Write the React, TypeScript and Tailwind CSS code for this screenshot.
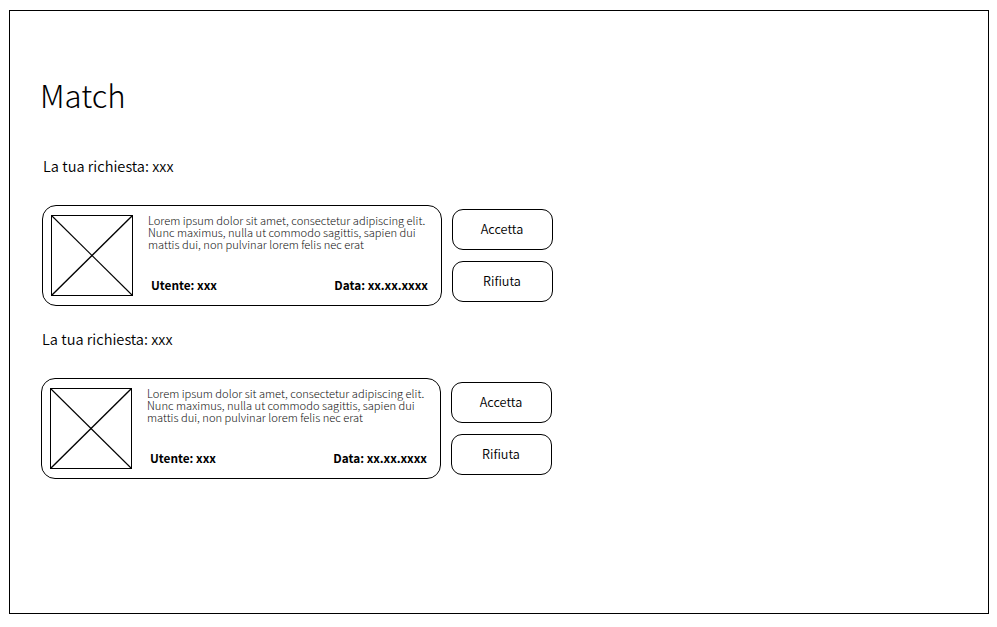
const LOREM = [
  "Lorem ipsum dolor sit amet, consectetur adipiscing elit.",
  "Nunc maximus, nulla ut commodo sagittis, sapien dui",
  "mattis dui, non pulvinar lorem felis nec erat",
];

function ImagePlaceholder() {
  return (
    <svg className="block h-[81px] w-[82px] shrink-0" viewBox="0 0 82 81" fill="none" stroke="#000">
      <rect x="0.5" y="0.5" width="81" height="80" />
      <path d="M0.5 0.5L81.5 80.5" strokeWidth="1.1" />
      <path d="M81.5 0.5L0.5 80.5" strokeWidth="1.4" />
    </svg>
  );
}

function ActionButton({ label }: { label: string }) {
  return (
    <button className="flex h-[41px] w-[101px] items-center justify-center rounded-[11px] border border-black bg-white pr-px pb-[2px] text-[12.7px] leading-5 font-[350]">
      {label}
    </button>
  );
}

function MatchRequest() {
  return (
    <section className="h-[173px]">
      <h2 className="ml-px h-5 text-[14.6px] leading-5 font-[350] whitespace-nowrap">
        La tua richiesta: xxx
      </h2>
      <div className="mt-[29px] flex">
        <article className="flex h-[101px] w-[400px] rounded-[14px] border border-black pt-[9px] pl-2">
          <ImagePlaceholder />
          <div className="-mt-px ml-[15px] w-[282px]">
            <p className="h-9 text-[11.13px] leading-3 font-light whitespace-nowrap text-[#111]">
              {LOREM.map((line) => (
                <span key={line} className="block">{line}</span>
              ))}
            </p>
            <div className="mt-[27px] flex justify-between pr-[2px] pl-[3px] text-[11.8px] leading-4 font-bold whitespace-nowrap">
              <span>Utente: xxx</span>
              <span>Data: xx.xx.xxxx</span>
            </div>
          </div>
        </article>
        <div className="mt-1 ml-[10px] flex flex-col gap-[11px]">
          <ActionButton label="Accetta" />
          <ActionButton label="Rifiuta" />
        </div>
      </div>
    </section>
  );
}

export default function App() {
  return (
    <div className="h-[627px] w-[997px] bg-white pt-[10px] pl-[9px] font-['Noto_Sans_CJK_SC',sans-serif] text-black">
      <main className="h-[604px] w-[980px] border border-black pt-[64px] pl-[31px]">
        <h1 className="mb-[41px] -ml-px h-10 text-[31.2px] leading-10 font-light">Match</h1>
        <div className="pl-px">
          <MatchRequest />
        </div>
        <MatchRequest />
      </main>
    </div>
  );
}
